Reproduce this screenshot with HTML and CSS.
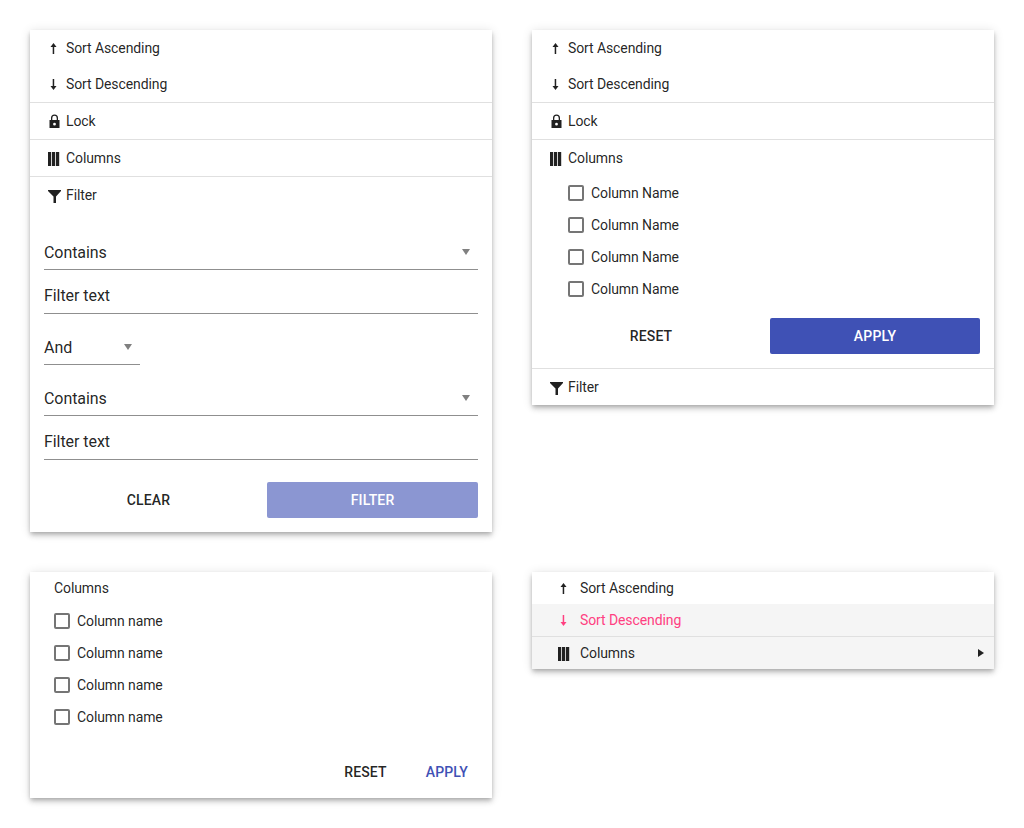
FILE: index.html
```html
<!DOCTYPE html>
<html lang="en">
<head>
<meta charset="utf-8">
<title>Column menus</title>
<link rel="stylesheet" href="styles.css">
</head>
<body>
<svg class="defs" aria-hidden="true">
  <symbol id="i-up" viewBox="0 0 16 16"><path d="M6.700 14V7H4.500L7.500 3l3 4H8.200v7z"/></symbol>
  <symbol id="i-down" viewBox="0 0 16 16"><path d="M6.700 3v7H4.500l3 4 3-4H8.200V3z"/></symbol>
  <symbol id="i-lock" viewBox="0 0 16 16"><path fill-rule="evenodd" d="M5 7V5a3.500 3.500 0 0 1 7 0V7h1.500v8H3.500V7zM6.300 7h4.400V5a2.200 2.200 0 0 0-4.400 0zM8.500 9.800a1.400 1.400 0 1 0 0 2.800 1.400 1.400 0 0 0 0-2.800z"/></symbol>
  <symbol id="i-cols" viewBox="0 0 16 16"><path d="M2 2h3.200v14H2zM6 2h3.200v14H6zM10 2h3.200v14H10z"/></symbol>
  <symbol id="i-filter" viewBox="0 0 16 16"><path d="M2 3h13v1L10 9.500V16H7.500V9.500L2 4z"/></symbol>
</svg>
<main class="page">
  <section class="panel panel-filter">
    <div class="item"><svg class="icon"><use href="#i-up"/></svg><span>Sort Ascending</span></div>
    <div class="item"><svg class="icon"><use href="#i-down"/></svg><span>Sort Descending</span></div>
    <hr class="divider">
    <div class="item"><svg class="icon"><use href="#i-lock"/></svg><span>Lock</span></div>
    <hr class="divider">
    <div class="item"><svg class="icon"><use href="#i-cols"/></svg><span>Columns</span></div>
    <hr class="divider">
    <div class="item"><svg class="icon"><use href="#i-filter"/></svg><span>Filter</span></div>
    <div class="filter-form">
      <div class="field field-select"><span>Contains</span><i class="caret"></i></div>
      <div class="field field-input"><span>Filter text</span></div>
      <div class="field field-select field-short"><span>And</span><i class="caret"></i></div>
      <div class="field field-select field-after"><span>Contains</span><i class="caret"></i></div>
      <div class="field field-input"><span>Filter text</span></div>
      <div class="actions actions-filter">
        <button class="btn" type="button">Clear</button>
        <button class="btn btn-solid btn-disabled" type="button">Filter</button>
      </div>
    </div>
  </section>

  <section class="panel panel-columns">
    <div class="item"><svg class="icon"><use href="#i-up"/></svg><span>Sort Ascending</span></div>
    <div class="item"><svg class="icon"><use href="#i-down"/></svg><span>Sort Descending</span></div>
    <hr class="divider">
    <div class="item"><svg class="icon"><use href="#i-lock"/></svg><span>Lock</span></div>
    <hr class="divider">
    <div class="item"><svg class="icon"><use href="#i-cols"/></svg><span>Columns</span></div>
    <div class="check-list check-list-nested">
      <label class="check"><i class="box"></i><span>Column Name</span></label>
      <label class="check"><i class="box"></i><span>Column Name</span></label>
      <label class="check"><i class="box"></i><span>Column Name</span></label>
      <label class="check"><i class="box"></i><span>Column Name</span></label>
    </div>
    <div class="actions actions-columns">
      <button class="btn" type="button">Reset</button>
      <button class="btn btn-solid" type="button">Apply</button>
    </div>
    <hr class="divider">
    <div class="item"><svg class="icon"><use href="#i-filter"/></svg><span>Filter</span></div>
  </section>

  <section class="panel panel-simple">
    <div class="simple-title">Columns</div>
    <div class="check-list check-list-simple">
      <label class="check"><i class="box"></i><span>Column name</span></label>
      <label class="check"><i class="box"></i><span>Column name</span></label>
      <label class="check"><i class="box"></i><span>Column name</span></label>
      <label class="check"><i class="box"></i><span>Column name</span></label>
    </div>
    <div class="actions actions-simple">
      <button class="btn" type="button">Reset</button>
      <button class="btn btn-text" type="button">Apply</button>
    </div>
  </section>

  <section class="panel panel-menu">
    <div class="item item-compact"><svg class="icon"><use href="#i-up"/></svg><span>Sort Ascending</span></div>
    <div class="item item-compact item-active"><svg class="icon"><use href="#i-down"/></svg><span>Sort Descending</span></div>
    <hr class="divider">
    <div class="item item-compact item-shaded"><svg class="icon"><use href="#i-cols"/></svg><span>Columns</span><i class="submenu"></i></div>
  </section>
</main>
</body>
</html>
```
FILE: styles.css
```css
* { box-sizing: border-box; }

html, body { margin: 0; padding: 0; background: #fff; }

body {
  font-family: Roboto, "Liberation Sans", sans-serif;
  font-size: 14px;
  letter-spacing: -0.1px;
  color: rgba(0, 0, 0, 0.87);
}

.defs { display: none; }

.page {
  display: grid;
  grid-template-columns: 462px 462px;
  column-gap: 40px;
  row-gap: 40px;
  align-items: start;
  padding: 30px;
  height: 828px;
  grid-template-rows: 502px auto;
}

.panel {
  background: #fff;
  box-shadow: 0 2px 4px -1px rgba(0, 0, 0, 0.2), 0 4px 5px 0 rgba(0, 0, 0, 0.14), 0 1px 10px 0 rgba(0, 0, 0, 0.12);
}

.divider {
  margin: 0;
  border: 0;
  height: 1px;
  background: #e0e0e0;
}

.item {
  display: flex;
  align-items: center;
  height: 36px;
  padding-left: 16px;
  gap: 4px;
  padding-right: 10px;
}

.icon {
  flex: none;
  width: 16px;
  height: 16px;
  fill: #212121;
}

.item-compact {
  height: 32px;
  padding-left: 24px;
  gap: 8px;
}

.item-active {
  background: #f5f5f5;
  color: #ff4081;
}

.item-active .icon { fill: #ff4081; }

.item-shaded { background: #f5f5f5; }

.submenu {
  margin-left: auto;
  width: 0;
  height: 0;
  border-style: solid;
  border-width: 4px 0 4px 6px;
  border-color: transparent transparent transparent #212121;
}

.filter-form {
  padding: 28px 14px 14px;
}

.field {
  display: flex;
  align-items: center;
  font-size: 16px;
  line-height: 24px;
  letter-spacing: -0.06px;
  border-bottom: 1px solid #8f8f8f;
}

.field-select {
  padding-bottom: 4px;
  padding-right: 8px;
  justify-content: space-between;
}

.field-input {
  padding-bottom: 5px;
  margin-top: 14px;
}

.field-short {
  width: 96px;
  margin-top: 22px;
}

.field-after { margin-top: 22px; }

.caret {
  width: 0;
  height: 0;
  margin-bottom: 2px;
  border-style: solid;
  border-width: 6px 4px 0;
  border-color: #808080 transparent transparent;
}

.actions { display: flex; }

.btn {
  height: 36px;
  padding: 0 16px;
  border: 0;
  border-radius: 2px;
  background: transparent;
  color: rgba(0, 0, 0, 0.87);
  font: 500 14px Roboto, "Liberation Sans", sans-serif;
  letter-spacing: 0.15px;
  text-transform: uppercase;
}

.btn-solid {
  background: #3f51b5;
  color: #fff;
}

.btn-disabled { opacity: 0.6; }

.btn-text { color: #3f51b5; }

.actions-filter {
  display: grid;
  grid-template-columns: 1fr 211px;
  margin-top: 22px;
  gap: 14px;
}

.actions-columns {
  margin-top: 13px;
  padding: 0 14px 14px;
  gap: 14px;
}

.actions-columns .btn { flex: 1; }

.actions-simple {
  justify-content: flex-end;
  gap: 7px;
  margin-top: 21px;
  padding: 0 8px 8px;
}

.check-list { padding-left: 36px; }

.check-list-nested { padding-top: 1px; }

.check-list-simple { padding-left: 24px; }

.check {
  display: flex;
  align-items: center;
  gap: 7px;
  height: 32px;
}

.box {
  flex: none;
  width: 16px;
  height: 16px;
  border: 2px solid #757575;
  border-radius: 2px;
}

.simple-title {
  height: 33px;
  padding-left: 24px;
  line-height: 32px;
}

.panel-menu .item-shaded { height: 32px; }
```
